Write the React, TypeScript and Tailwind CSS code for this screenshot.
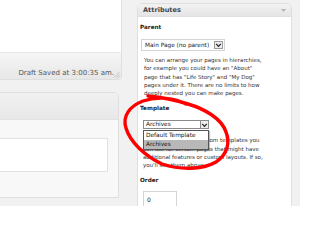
import React from "react";

function Chevron() {
  return (
    <svg width="7" height="6" viewBox="0 0 7 6" className="block">
      <path d="M1.2 1.8 L3.5 4.3 L5.8 1.8" fill="none" stroke="#222" strokeWidth="1.2" />
    </svg>
  );
}

export default function App() {
  return (
    <div className="relative w-[300px] h-[206px] overflow-hidden bg-[#f1f1f1] flex font-['DejaVu_Sans',Verdana,sans-serif] text-[#333]">
      {/* left column */}
      <div className="flex flex-col w-[122px] shrink-0">
        <div className="h-[80px] flex flex-col bg-white border-r border-b border-[#dfdfdf] rounded-br-[4px] overflow-hidden">
          <div className="h-[53px] bg-white border-b border-[#e8e8e8]" />
          <div className="relative flex-1 bg-gradient-to-b from-[#f6f6f6] to-[#e7e7e7] flex items-end justify-end pr-[7px] pb-[2px]">
            <span className="text-[7px] leading-[8px] text-[#555] whitespace-nowrap">Draft Saved at 3:00:35 am.</span>
            <svg width="7" height="7" viewBox="0 0 7 7" className="absolute right-[1px] bottom-[1px]">
              <path d="M6.5 1 L1 6.5 M6.5 3.5 L3.5 6.5 M6.5 5.5 L5.5 6.5" stroke="#bbb" strokeWidth="0.8" />
            </svg>
          </div>
        </div>
        <div className="mt-[12px] w-[119px] h-[106px] flex flex-col border-t border-r border-b border-[#dfdfdf] rounded-tr-[5px] overflow-hidden">
          <div className="h-[27px] bg-gradient-to-b from-[#f1f1f1] to-[#e8e8e8] border-b border-[#e2e2e2]" />
          <div className="flex-1 bg-[#f8f8f8] pt-[18px] pr-[10px]">
            <div className="h-[34px] bg-white border border-l-0 border-[#e2e2e2]" />
          </div>
        </div>
      </div>

      {/* sidebar */}
      <div className="ml-[15px] mt-[3px] w-[155px] h-[230px] shrink-0 flex flex-col bg-white border border-[#dfdfdf] rounded-t-[5px] overflow-hidden">
        <div className="h-[13px] shrink-0 bg-gradient-to-b from-[#f2f2f2] to-[#e5e5e5] border-b border-[#dfdfdf] flex items-center justify-between pl-[5px] pr-[5px]">
          <span className="text-[6.6px] leading-[8px] font-bold text-[#464646]">Attributes</span>
          <svg width="5" height="3" viewBox="0 0 5 3"><path d="M0 0 L5 0 L2.5 3 Z" fill="#b5b5b5" /></svg>
        </div>
        <div className="flex flex-col">
          <div className="mt-[6px] ml-[2px] h-[8px] leading-[8px] text-[5.7px] font-bold text-[#222]">Parent</div>
          <div className="mt-[8px] ml-[3px] w-[84px] h-[12px] border border-[#d4d4d4] bg-white flex items-center">
            <span className="flex-1 pl-[3px] text-[5.8px] leading-[8px] text-[#222] whitespace-nowrap">Main Page (no parent)</span>
            <div className="w-[9px] h-[8px] mr-[1px] border border-[#9a9a9a] bg-[#ececec] flex items-center justify-center"><Chevron /></div>
          </div>
          <div className="mt-[5px] ml-[6px] text-[5.5px] leading-[8.25px] text-[#333] whitespace-nowrap">
            You can arrange your pages in hierarchies,<br />
            for example you could have an "About"<br />
            page that has "Life Story" and "My Dog"<br />
            pages under it. There are no limits to how<br />
            deeply nested you can make pages.
          </div>
          <div className="mt-[7px] ml-[2px] h-[8px] leading-[8px] text-[5.7px] font-bold text-[#222]">Template</div>
          <div className="relative mt-[8px] ml-[5px] w-[66px] h-[9px] border border-[#8a8a8a] bg-white flex items-center z-10">
            <span className="flex-1 pl-[2px] text-[5.8px] leading-[7px] text-[#111] whitespace-nowrap">Archives</span>
            <div className="w-[8px] h-[7px] border-l border-[#8a8a8a] bg-[#efefef] flex items-center justify-center"><Chevron /></div>
            <div className="absolute left-[-1px] top-[9px] w-[66px] h-[20px] bg-white border border-[#555] flex flex-col shadow-[1px_1px_1px_rgba(0,0,0,0.25)]">
              <div className="h-[9px] pl-[2px] text-[5.8px] leading-[9px] text-[#111] whitespace-nowrap">Default Template</div>
              <div className="h-[9px] pl-[2px] text-[5.8px] leading-[9px] text-[#111] bg-[#b8b8b8] whitespace-nowrap">Archives</div>
            </div>
          </div>
          <div className="mt-[7px] ml-[5px] text-[5.5px] leading-[8.25px] text-[#333] whitespace-nowrap">
            Some themes have custom templates you<br />
            can use for certain pages that might have<br />
            additional features or custom layouts. If so,<br />
            you'll see them above.
          </div>
          <div className="mt-[7px] ml-[2px] h-[8px] leading-[8px] text-[5.7px] font-bold text-[#222]">Order</div>
          <div className="mt-[7px] ml-[5px] w-[34px] h-[16px] border border-[#d4d4d4] bg-white flex items-center">
            <span className="pl-[3px] text-[6px] text-[#222]">0</span>
          </div>
        </div>
      </div>

      {/* red hand-drawn circle */}
      <svg className="absolute inset-0 pointer-events-none" width="300" height="206" viewBox="0 0 300 206">
        <path
          d="M 186 104 C 175 98, 158 96, 143 101 C 130 106, 122 116, 126 128 C 130 142, 145 156, 162 164 C 180 170, 202 170, 216 162 C 228 154, 230 142, 226 132 C 222 119, 205 109, 188 104 C 172 99, 158 97, 148 96"
          fill="none"
          stroke="#ff0000"
          strokeWidth="3.4"
          strokeLinecap="round"
          strokeLinejoin="round"
        />
      </svg>
    </div>
  );
}
